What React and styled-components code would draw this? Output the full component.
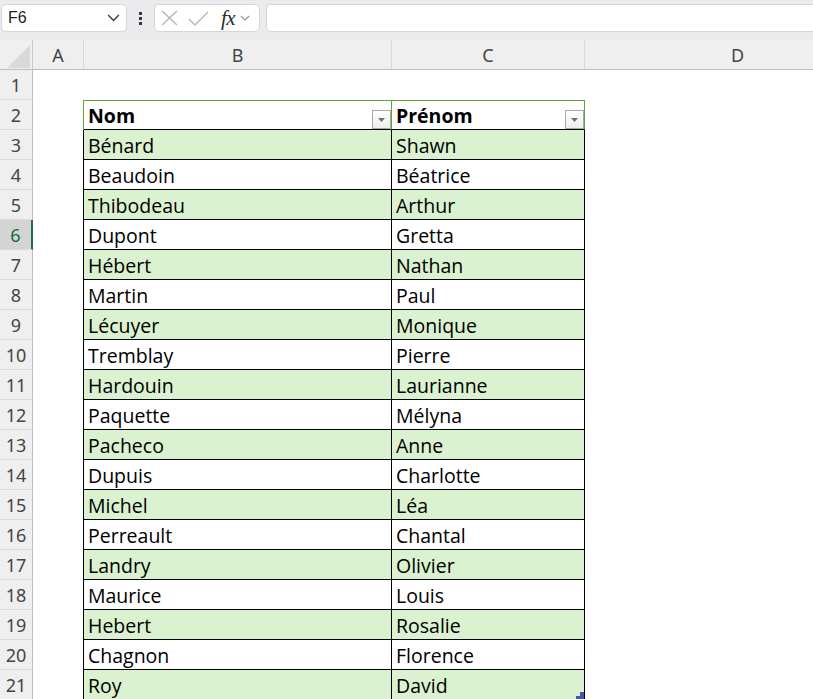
import React from 'react';
import styled, { createGlobalStyle, css } from 'styled-components';

const GlobalStyle = createGlobalStyle`
  html, body {
    margin: 0;
    padding: 0;
    background: #ffffff;
    overflow: hidden;
  }
  body {
    font-family: "Open Sans", "Noto Sans", sans-serif;
  }
`;

const names = [
  ['Bénard', 'Shawn'],
  ['Beaudoin', 'Béatrice'],
  ['Thibodeau', 'Arthur'],
  ['Dupont', 'Gretta'],
  ['Hébert', 'Nathan'],
  ['Martin', 'Paul'],
  ['Lécuyer', 'Monique'],
  ['Tremblay', 'Pierre'],
  ['Hardouin', 'Laurianne'],
  ['Paquette', 'Mélyna'],
  ['Pacheco', 'Anne'],
  ['Dupuis', 'Charlotte'],
  ['Michel', 'Léa'],
  ['Perreault', 'Chantal'],
  ['Landry', 'Olivier'],
  ['Maurice', 'Louis'],
  ['Hebert', 'Rosalie'],
  ['Chagnon', 'Florence'],
  ['Roy', 'David'],
];

const GREEN = '#5fa637';
const BAND = '#daf2d0';

const Page = styled.div`
  width: 813px;
  height: 699px;
  overflow: hidden;
  background: #ffffff;
`;

const Toolbar = styled.div`
  display: flex;
  align-items: center;
  height: 40px;
  padding: 4px 0 8px 1px;
  box-sizing: border-box;
  background: #ebebed;
  overflow: hidden;
`;

const Box = styled.div`
  height: 28px;
  box-sizing: border-box;
  background: #ffffff;
  border: 1px solid #d6d6d8;
  border-radius: 5px;
  display: flex;
  align-items: center;
`;

const NameBox = styled(Box)`
  width: 126px;
  padding: 0 6px 0 6px;
  justify-content: space-between;
  font-family: "Liberation Sans", Arial, sans-serif;
  font-size: 16px;
  color: #1f1f1f;
`;

const Dots = styled.div`
  width: 27px;
  display: flex;
  flex-direction: column;
  align-items: center;
  gap: 2px;
  span {
    width: 3px;
    height: 3px;
    background: #3a3a3a;
  }
`;

const FxBox = styled(Box)`
  width: 106px;
  padding: 0 4px 0 6px;
`;

const FxText = styled.span`
  font-family: "Liberation Serif", "DejaVu Serif", serif;
  font-style: italic;
  font-size: 21px;
  color: #2d2d2d;
  margin-left: 12px;
  letter-spacing: -0.5px;
  line-height: 1;
`;

const FormulaInput = styled(Box)`
  flex: 1;
  margin-left: 6px;
  margin-right: -12px;
`;

const Sheet = styled.div`
  display: grid;
  grid-template-columns: 33px 51px 308px 193px 306px;
  grid-auto-rows: 30px;
`;

const HeadBase = css`
  box-sizing: border-box;
  background: #efefef;
  display: flex;
  align-items: center;
  justify-content: center;
  font-family: "Noto Sans", "Open Sans", sans-serif;
  font-size: 18px;
  color: #454545;
`;

const Corner = styled.div`
  ${HeadBase};
  border-right: 1px solid #c9c9c9;
  border-bottom: 1px solid #bdbdbd;
  position: relative;
`;

const ColHead = styled.div`
  ${HeadBase};
  border-right: 1px solid #d9d9d9;
  border-bottom: 1px solid #bdbdbd;
`;

const RowHead = styled.div`
  ${HeadBase};
  border-right: 1px solid #bdbdbd;
  border-bottom: 1px solid #dadada;
  ${(p) =>
    p.$active &&
    css`
      background: #d4d4d4;
      color: #146c3a;
      border-right: 2px solid #1e7145;
    `}
`;

const Cell = styled.div`
  box-sizing: border-box;
  position: relative;
  display: flex;
  align-items: center;
  padding: 1px 0 0 4px;
  font-size: 19.5px;
  color: #000000;
  white-space: nowrap;
  background: ${(p) => (p.$fill ? BAND : 'transparent')};
  border-right: ${(p) => (p.$right ? `1px solid ${p.$right}` : 'none')};
  border-top: ${(p) => (p.$top ? `1px solid ${p.$top}` : 'none')};
  border-bottom: ${(p) => (p.$bottom ? `1px solid ${p.$bottom}` : 'none')};
  font-weight: ${(p) => (p.$bold ? 700 : 400)};
`;

const FilterButton = styled.div`
  position: absolute;
  right: 0;
  bottom: 0;
  width: 19px;
  height: 19px;
  box-sizing: border-box;
  border: 1px solid #a9a9a9;
  background: linear-gradient(#ffffff, #eeeeee);
  display: flex;
  align-items: center;
  justify-content: center;
`;

const ResizeHandle = styled.svg`
  position: absolute;
  right: 0;
  bottom: 0;
`;

const Chevron = ({ size = 12, color = '#444' }) => (
  <svg width={size} height={size / 2 + 1} viewBox="0 0 12 7">
    <path d="M1 1l5 5 5-5" fill="none" stroke={color} strokeWidth="1.3" />
  </svg>
);

const CornerMark = () => (
  <svg
    width="23"
    height="23"
    viewBox="0 0 23 23"
    style={{ position: 'absolute', left: 7, top: 5 }}
  >
    <polygon points="23,0 23,23 0,23" fill="#d9d9d9" />
  </svg>
);

const FilterArrow = () => (
  <FilterButton>
    <svg width="7" height="4" viewBox="0 0 7 4">
      <polygon points="0,0 7,0 3.5,4" fill="#6f6f6f" />
    </svg>
  </FilterButton>
);

export default function App() {
  const rows = [];
  for (let r = 1; r <= 21; r++) {
    const active = r === 6;
    rows.push(<RowHead key={`h${r}`} $active={active}>{r}</RowHead>);
    if (r === 1) {
      rows.push(<Cell key="a1" />, <Cell key="b1" />, <Cell key="c1" />, <Cell key="d1" />);
      continue;
    }
    if (r === 2) {
      rows.push(
        <Cell key="a2" $right={GREEN} />,
        <Cell key="b2" $bold $top={GREEN} $bottom="#000" $right={GREEN}>
          Nom
          <FilterArrow />
        </Cell>,
        <Cell key="c2" $bold $top={GREEN} $bottom="#000" $right={GREEN}>
          Prénom
          <FilterArrow />
        </Cell>,
        <Cell key="d2" />
      );
      continue;
    }
    const [nom, prenom] = names[r - 3];
    const fill = r % 2 === 1;
    const last = r === 21;
    rows.push(
      <Cell key={`a${r}`} $right="#000" />,
      <Cell key={`b${r}`} $fill={fill} $right="#000" $bottom={last ? null : '#000'}>
        {nom}
      </Cell>,
      <Cell key={`c${r}`} $fill={fill} $right="#000" $bottom={last ? null : '#000'}>
        {prenom}
        {last && (
          <ResizeHandle width="8" height="8" viewBox="0 0 8 8">
            <polygon points="4,0 8,0 8,8 0,8 0,4 4,4" fill="#4657b3" />
          </ResizeHandle>
        )}
      </Cell>,
      <Cell key={`d${r}`} />
    );
  }

  return (
    <Page>
      <GlobalStyle />
      <Toolbar>
        <NameBox>
          <span>F6</span>
          <Chevron size={13} color="#3a3a3a" />
        </NameBox>
        <Dots>
          <span />
          <span />
          <span />
        </Dots>
        <FxBox>
          <svg width="17" height="16" viewBox="0 0 17 16">
            <path d="M1 1l15 14M16 1L1 15" stroke="#b5b5b5" strokeWidth="1.4" fill="none" />
          </svg>
          <svg width="21" height="15" viewBox="0 0 21 15" style={{ marginLeft: 10 }}>
            <path d="M1 8l6 6L20 1" stroke="#b5b5b5" strokeWidth="1.4" fill="none" />
          </svg>
          <FxText>fx</FxText>
          <span style={{ marginLeft: 5, display: 'flex' }}>
            <Chevron size={10} color="#8a8a8a" />
          </span>
        </FxBox>
        <FormulaInput />
      </Toolbar>
      <Sheet>
        <Corner>
          <CornerMark />
        </Corner>
        <ColHead>A</ColHead>
        <ColHead>B</ColHead>
        <ColHead>C</ColHead>
        <ColHead>D</ColHead>
        {rows}
      </Sheet>
    </Page>
  );
}
